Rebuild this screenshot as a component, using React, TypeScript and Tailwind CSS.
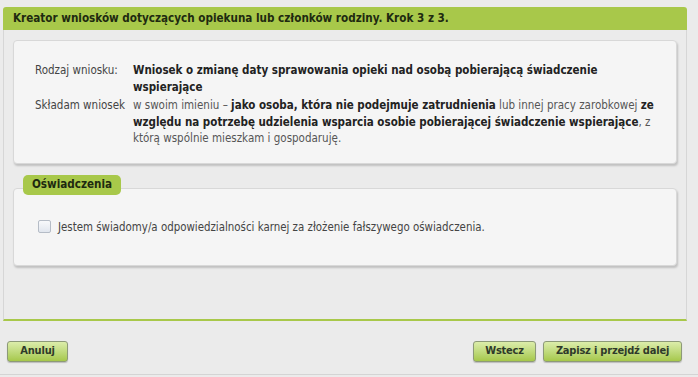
import React from "react";

const F = { fontFamily: '"DejaVu Sans Condensed", "DejaVu Sans", sans-serif' };

function Btn({ children, className = "" }: { children: React.ReactNode; className?: string }) {
  return (
    <button
      className={
        "h-[21px] rounded-[3px] border border-[#8d9a78] bg-gradient-to-b from-[#dcedaa] to-[#a6c84a] text-[11px] font-bold tracking-[-0.2px] text-[#2f3a2a] shadow-[0_1px_1px_rgba(0,0,0,0.2)] " +
        className
      }
    >
      {children}
    </button>
  );
}

export default function App() {
  return (
    <div className="h-[377px] w-[698px] bg-[#ebebeb] pt-[7px]" style={F}>
      <div className="mx-[3px] w-[684px]">
        <div className="flex h-[23px] items-center rounded-t-[3px] bg-[#a8c84a] pl-[10px] text-[11.6px] font-bold text-[#1e2a10]">
          Kreator wniosków dotyczących opiekuna lub członków rodziny. Krok 3 z 3.
        </div>
        <div className="h-[291px] border-x border-[#d6d6d6] border-b-2 border-b-[#a8c84a] px-[9px] pt-[10px]">
          <div className="rounded-[4px] border border-[#d8d8d8] bg-[#f5f5f5] pb-[16px] pl-[21px] pr-[16px] pt-[21px] shadow-[1px_2px_2px_rgba(0,0,0,0.18)]">
            <div className="grid grid-cols-[98px_1fr] gap-y-[2px] text-[11.5px] leading-[16.5px]">
              <div className="text-[#444]">Rodzaj wniosku:</div>
              <div className="font-bold text-[#222]">
                Wniosek o zmianę daty sprawowania opieki nad osobą pobierającą świadczenie wspierające
              </div>
              <div className="text-[#444]">Składam wniosek</div>
              <div className="text-[#555]">
                w swoim imieniu – <b className="text-[#222]">jako osoba, która nie podejmuje zatrudnienia</b> lub innej pracy zarobkowej{" "}
                <b className="text-[#222]">ze względu na potrzebę udzielenia wsparcia osobie pobierającej świadczenie wspierające</b>, z którą wspólnie mieszkam i gospodaruję.
              </div>
            </div>
          </div>
          <div className="relative mt-[24px]">
            <div className="absolute left-[10px] top-[-13px] flex h-[20px] items-center rounded-[5px] bg-[#a8c84a] px-[9px] text-[11.6px] font-bold text-[#1e2a10]">
              Oświadczenia
            </div>
            <div className="h-[78px] rounded-[4px] border border-[#d8d8d8] bg-[#f5f5f5] pl-[24px] pt-[30px] shadow-[1px_2px_2px_rgba(0,0,0,0.18)]">
              <label className="flex items-center gap-[7px] text-[11.4px] leading-[16px] text-[#444]">
                <span className="h-[13px] w-[13px] rounded-[2px] border border-[#b5bcc6] bg-gradient-to-b from-[#f8f9fb] to-[#e1e6ee]" />
                Jestem świadomy/a odpowiedzialności karnej za złożenie fałszywego oświadczenia.
              </label>
            </div>
          </div>
        </div>
      </div>
      <div className="mx-[7px] mt-[20px] flex w-[675px] items-center">
        <Btn className="w-[61px]">Anuluj</Btn>
        <div className="flex-1" />
        <Btn className="w-[63px]">Wstecz</Btn>
        <Btn className="ml-[7px] w-[139px]">Zapisz i przejdź dalej</Btn>
      </div>
      <div className="mt-[12px] h-px w-[698px] bg-[#d4d4d4]" />
    </div>
  );
}
